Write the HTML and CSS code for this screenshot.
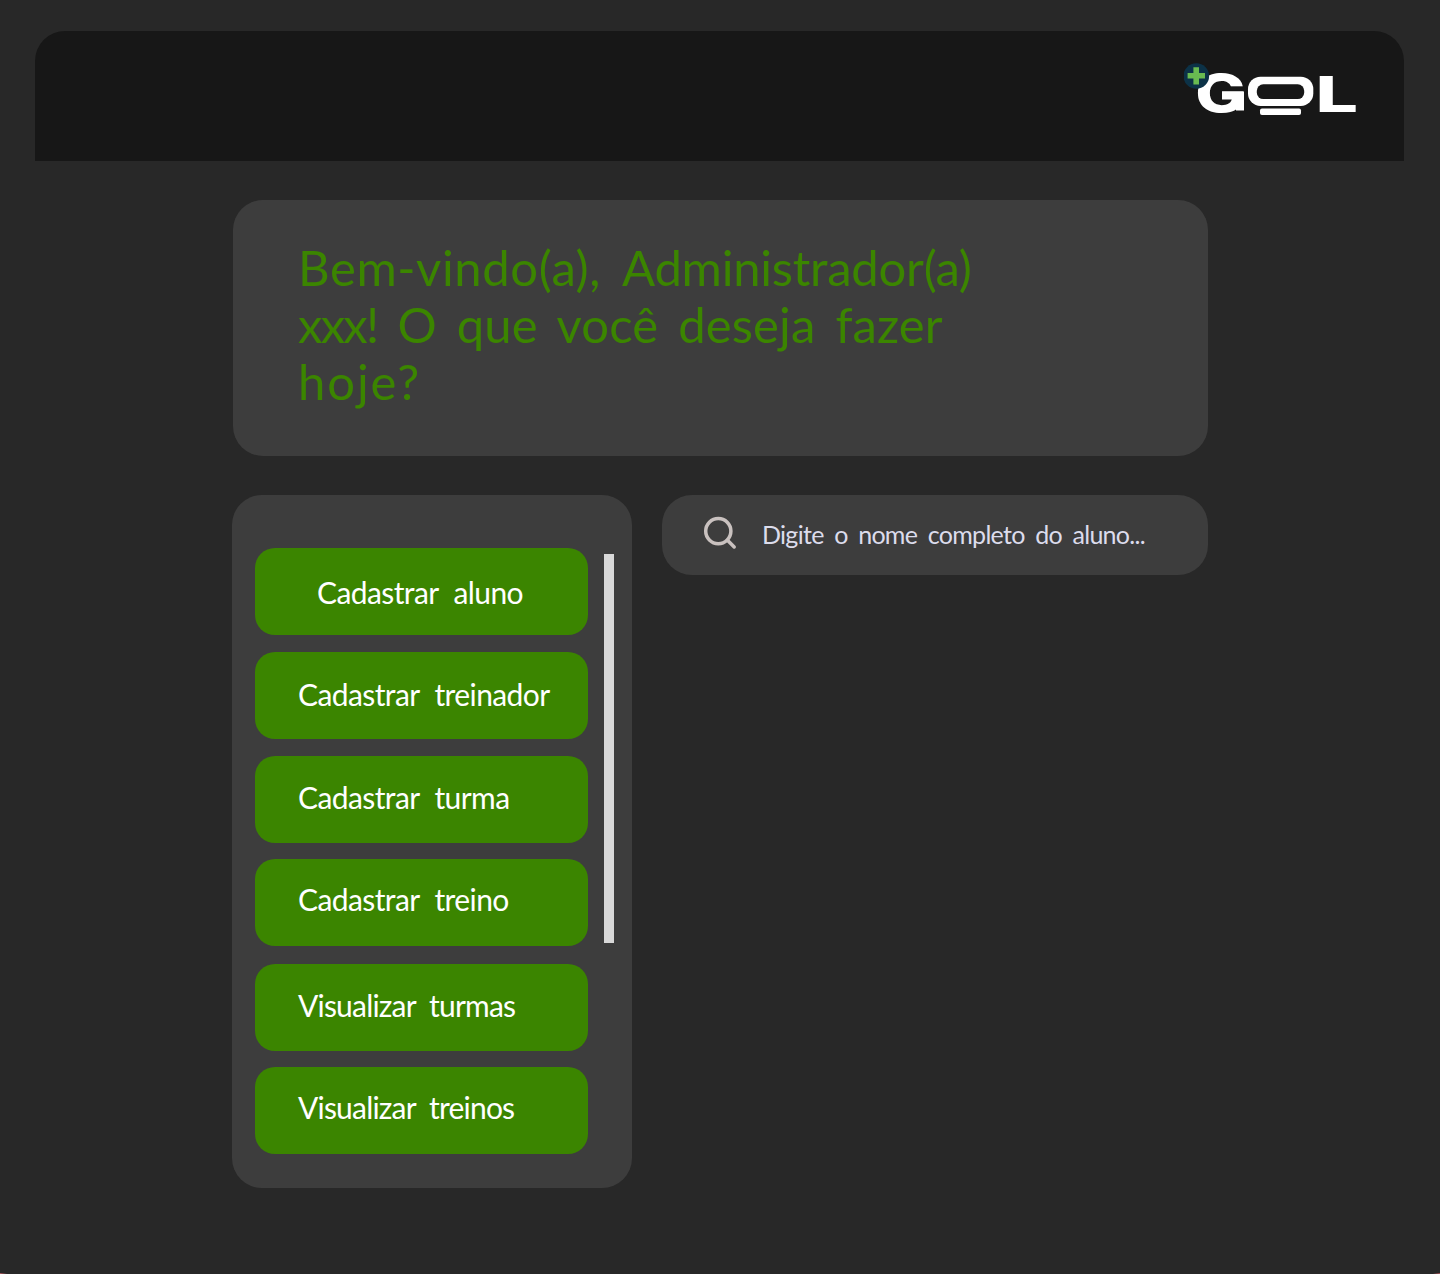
FILE: index.html
```html
<!DOCTYPE html>
<html lang="pt-BR">
<head>
<meta charset="utf-8">
<title>+GOL</title>
<link rel="stylesheet" href="styles.css">
</head>
<body>
<div class="page">
  <header class="topbar">
    <svg class="logo" width="182" height="66" viewBox="0 0 182 66" role="img" aria-label="+GOL">
      <g class="wordmark">
        <text class="letter-g" transform="translate(11.2 48.5) scale(1.3 1)">G</text>
        <text class="letter-l" transform="translate(131.4 49) scale(1.52 1)">L</text>
      </g>
      <path d="M38 28.6h22v19h-8v-11h-14z" fill="#fff"/>
      <rect x="64" y="13.7" width="65.3" height="29.3" rx="12.5" fill="#fff"/>
      <rect x="72.8" y="21.3" width="47.4" height="14.8" rx="6.5" fill="#171717"/>
      <rect x="76" y="45.4" width="41" height="6.6" rx="2" fill="#fff"/>
      <circle cx="12.3" cy="13" r="12.8" fill="#0c3247"/>
      <path d="M12.2 4.2v17.4M3.6 12.8h17.4" stroke="#69bb51" stroke-width="5.6"/>
    </svg>
  </header>
  <main class="content">
    <section class="welcome">
      <h1 class="welcome-title"><span class="greeting">Bem-vindo(a),</span> <span class="role">Administrador(a)</span><br><span class="name">xxx!</span> O que você deseja fazer<br><span class="last">hoje?</span></h1>
    </section>
    <div class="columns">
      <aside class="panel">
        <nav class="actions">
          <a class="action action-centered">Cadastrar aluno</a>
          <a class="action">Cadastrar treinador</a>
          <a class="action">Cadastrar turma</a>
          <a class="action">Cadastrar treino</a>
          <a class="action action-view">Visualizar turmas</a>
          <a class="action action-view">Visualizar treinos</a>
        </nav>
        <div class="scrollbar"></div>
      </aside>
      <div class="search">
        <svg class="search-icon" width="34" height="34" viewBox="0 0 34 34" fill="none" stroke="#c9c1bf" stroke-width="3.5" stroke-linecap="round"><circle cx="15.3" cy="15.1" r="12.6"/><path d="M24.5 24.3l6.7 6.7"/></svg>
        <span class="search-text">Digite o nome completo do aluno...</span>
      </div>
    </div>
  </main>
</div>
</body>
</html>
```

FILE: styles.css
```css
* { box-sizing: border-box; }
body {
  margin: 0;
  background: #282828;
  font-family: Lato, sans-serif;
}
.page {
  height: 1274px;
  padding: 31px 36px 0 35px;
  overflow: hidden;
  background:
    linear-gradient(90deg, #a8555a, #282828) left bottom / 7px 1px no-repeat,
    linear-gradient(270deg, #a8555a, #282828) right bottom / 7px 1px no-repeat;
}
.topbar {
  display: flex;
  justify-content: flex-end;
  height: 130px;
  padding: 32px 38px 0 0;
  background: #171717;
  border-radius: 30px 30px 0 0;
}
.wordmark {
  fill: #fff;
  font-family: Inter, sans-serif;
  font-weight: 800;
}
.letter-g { font-size: 52px; }
.letter-l { font-size: 49.5px; }
.content {
  width: 976px;
  margin: 39px 0 0 197px;
}
.welcome {
  height: 256px;
  margin-left: 1px;
  padding: 39px 65px;
  background: #3d3d3d;
  border-radius: 30px;
}
.welcome-title {
  margin: 0;
  color: #3b8500;
  font-size: 49px;
  font-weight: 400;
  line-height: 57px;
  letter-spacing: 0.1px;
  word-spacing: 7.4px;
  white-space: nowrap;
}
.greeting { margin-right: 1px; letter-spacing: 0.6px; }
.role { letter-spacing: -0.25px; }
.name { letter-spacing: -1.75px; }
.last { letter-spacing: 1.9px; }
.columns {
  display: flex;
  align-items: flex-start;
  gap: 30px;
  margin-top: 39px;
}
.panel {
  display: flex;
  gap: 16px;
  width: 400px;
  height: 693px;
  padding: 53px 18px 0 23px;
  background: #3d3d3d;
  border-radius: 30px;
}
.actions {
  display: grid;
  grid-template-rows: 104px 104px 103px 105px 103px 87px;
  width: 333px;
}
.action {
  height: 87px;
  padding: 24px 0 0 43px;
  background: #3b8500;
  border-radius: 20px;
  color: #fff;
  font-size: 30px;
  line-height: 36px;
  letter-spacing: -0.6px;
  word-spacing: 8.5px;
  white-space: nowrap;
}
.action-centered { padding: 26px 0 0 62px; }
.action:nth-child(3) { padding-top: 23px; }
.action:nth-child(4) { padding-top: 22px; }
.action-view {
  padding-top: 23px;
  letter-spacing: -0.8px;
  word-spacing: 7px;
}
.action-view:last-child { padding-top: 22px; }
.scrollbar {
  width: 10px;
  height: 389px;
  margin-top: 6px;
  background: #d9d9d9;
}
.search {
  display: flex;
  align-items: center;
  width: 546px;
  height: 80px;
  padding-left: 41px;
  background: #3d3d3d;
  border-radius: 30px;
}
.search-icon { margin: 0 25px 4px 0; }
.search-text {
  padding-bottom: 2px;
  color: #dcdcec;
  font-size: 25px;
  letter-spacing: -0.7px;
  word-spacing: 4.8px;
  white-space: nowrap;
}
```
